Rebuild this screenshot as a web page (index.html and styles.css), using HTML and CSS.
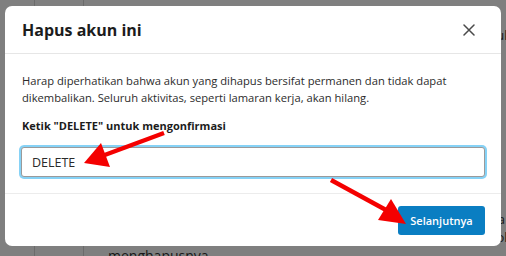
FILE: index.html
```html
<!doctype html>
<html lang="id">

    <head>
        <meta charset="UTF-8" />
        <title>Hapus akun ini</title>
        <link rel="stylesheet" href="styles.css">
    </head>

    <body>
        <div class="page">
            <div class="col col-a"></div>
            <div class="col col-b"></div>
            <div class="main">
                <p class="bg-line bg-top">Anda dapat menghapus akun kapan saja jika tidak lagi memerlukannya untuk mencari lowongan c</p>
                <p class="bg-line bg-mid">Semua data lamaran dan riwayat pekerjaan akan dihapus secara permanen dari sistem kami s</p>
                <p class="bg-line bg-low">setelah Anda mengonfirmasi permintaan dan menekan tombol di bawah ini untuk a</p>
                <p class="bg-line bg-end">menghapusnya</p>
            </div>
        </div>

        <div class="mask"></div>

        <div class="modal">
            <div class="modal-head">
                <span class="modal-title">Hapus akun ini</span>
                <a class="close" href="#">
                    <svg width="12" height="12" viewBox="0 0 12 12">
                        <path d="M1 1L11 11M11 1L1 11" stroke="#4a4a4a" stroke-width="1.5" stroke-linecap="round" />
                    </svg>
                </a>
            </div>
            <div class="modal-body">
                <p class="note">Harap diperhatikan bahwa akun yang dihapus bersifat permanen dan tidak dapat dikembalikan. Seluruh aktivitas, seperti lamaran kerja, akan hilang.</p>
                <label class="label">Ketik "DELETE" untuk mengonfirmasi</label>
                <input class="confirm" type="text" value="DELETE" />
            </div>
            <div class="modal-foot">
                <button class="next">Selanjutnya</button>
            </div>
        </div>

        <!-- anotasi panah merah -->
        <svg class="arrows" width="506" height="256" viewBox="0 0 506 256">
            <line x1="164" y1="133" x2="102" y2="156" stroke="#f40000" stroke-width="4.5" />
            <polygon points="84,163 101,143 110,167" fill="#f40000" />
            <line x1="331" y1="180" x2="386" y2="210" stroke="#f40000" stroke-width="4.5" />
            <polygon points="406,224 391,199 378,220" fill="#f40000" />
        </svg>
    </body>

</html>
```

FILE: styles.css
```css
* {
    padding: 0px;
    margin: 0px;
    box-sizing: border-box;
}

html,
body {
    width: 506px;
    height: 256px;
    overflow: hidden;
    font-family: "Open Sans", "Noto Sans", sans-serif;
    background: #ffffff;
}

.page {
    display: flex;
    width: 100%;
    height: 100%;
    overflow: hidden;
}

.col {
    border-right: 1px solid #d6d6d6;
}

.col-a {
    width: 35px;
}

.col-b {
    width: 49px;
}

.main {
    flex: 1;
    overflow: hidden;
    padding-left: 24px;
    font-size: 13px;
    color: #333;
    white-space: nowrap;
}

.bg-line {
    line-height: 18px;
}

.bg-top {
    margin-top: 26px;
    padding-left: 10px;
}

.bg-mid {
    margin-top: 166px;
    padding-left: 6px;
}

.bg-low {
    padding-left: 18px;
}

.bg-end {
    font-size: 14px;
    margin-top: 1px;
}

div.mask {
    width: 100%;
    height: 100%;
    background: #000000;
    opacity: 0.5;
    position: absolute;
    top: 0px;
    left: 0px;
}

.modal {
    position: absolute;
    top: 6px;
    left: 5px;
    width: 496px;
    height: 240px;
    background: #fff;
    border-radius: 7px;
    display: flex;
    flex-direction: column;
}

.modal-head {
    height: 48px;
    display: flex;
    align-items: center;
    justify-content: space-between;
    padding: 0px 26px 0px 17px;
    border-bottom: 1px solid #e6e6e6;
}

.modal-title {
    font-size: 16px;
    font-weight: 700;
    color: #1c1c1c;
}

.close {
    display: flex;
    width: 12px;
    height: 12px;
}

.modal-body {
    padding: 18px 16px 16px;
    border-bottom: 1px solid #ececec;
}

.note {
    padding-left: 1px;
    font-size: 11.2px;
    line-height: 17px;
    color: #2b2b2b;
}

.label {
    display: block;
    margin-top: 11px;
    padding-left: 1px;
    font-size: 11px;
    line-height: 18px;
    font-weight: 700;
    color: #1c1c1c;
}

.confirm {
    display: block;
    width: 100%;
    height: 30px;
    margin-top: 12px;
    border: 1px solid #9a9a9a;
    border-radius: 3px;
    box-shadow: 0 0 0 2px #86d2f6;
    outline: none;
    padding-left: 10px;
    font-family: inherit;
    font-size: 12.5px;
    color: #2a2a2a;
}

.modal-foot {
    flex: 1;
    display: flex;
    align-items: center;
    justify-content: flex-end;
    padding: 0px 16px;
}

.next {
    width: 87px;
    height: 29px;
    border: none;
    border-radius: 3px;
    background: #0a7ec2;
    color: #fff;
    font-family: inherit;
    font-size: 11px;
    font-weight: 600;
}

.arrows {
    position: absolute;
    top: 0px;
    left: 0px;
}
```
